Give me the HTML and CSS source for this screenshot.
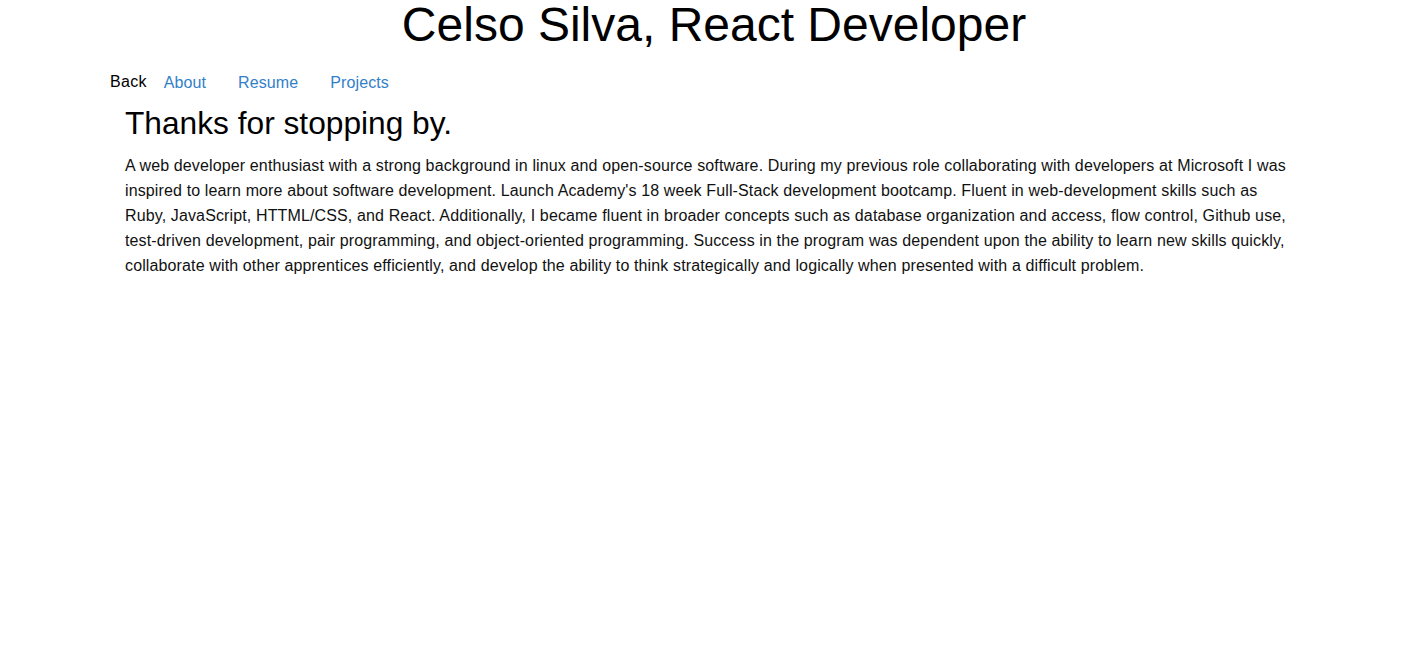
FILE: index.html
```html
<!DOCTYPE html>
<html>
<head>
<meta charset="utf-8">
<link rel="stylesheet" href="styles.css">
</head>
<body>
<h1 class="title">Celso Silva, React Developer</h1>
<div class="wrap">
  <nav class="nav">
    <span class="back">Back</span>
    <a class="link" href="#">About</a>
    <a class="link" href="#">Resume</a>
    <a class="link" href="#">Projects</a>
  </nav>
  <section class="content">
    <h2 class="heading">Thanks for stopping by.</h2>
    <p class="text">A web developer enthusiast with a strong background in linux and open-source software. During my previous role collaborating with developers at Microsoft I was inspired to learn more about software development. Launch Academy's 18 week Full-Stack development bootcamp. Fluent in web-development skills such as Ruby, JavaScript, HTTML/CSS, and React. Additionally, I became fluent in broader concepts such as database organization and access, flow control, Github use, test-driven development, pair programming, and object-oriented programming. Success in the program was dependent upon the ability to learn new skills quickly, collaborate with other apprentices efficiently, and develop the ability to think strategically and logically when presented with a difficult problem.</p>
  </section>
</div>
</body>
</html>
```
FILE: styles.css
```css
html, body {
  margin: 0;
  padding: 0;
  background: #fff;
  color: #111;
  font-family: "Liberation Sans", Arial, sans-serif;
}
.title {
  margin: -2px 0 0;
  padding-top: 2px;
  text-align: center;
  font-weight: normal;
  font-size: 48px;
  line-height: 50px;
  color: #000;
}
.wrap {
  margin: 0 118px 0 110px;
}
.nav {
  display: flex;
  align-items: baseline;
  padding-top: 23px;
  font-size: 16px;
  line-height: 20px;
}
.back {
  color: #000;
  margin-right: 17px;
  letter-spacing: 0.3px;
  position: relative;
  top: -1px;
}
.link {
  color: #3280c8;
  text-decoration: none;
  margin-right: 32px;
  letter-spacing: 0.1px;
}
.content {
  padding: 0 15px;
}
.heading {
  margin: 10px 0 0;
  font-weight: normal;
  font-size: 31.7px;
  line-height: 40px;
  color: #000;
}
.text {
  margin: 10px 0 0;
  font-size: 16px;
  letter-spacing: 0.13px;
  line-height: 25px;
  color: #111;
}
```
